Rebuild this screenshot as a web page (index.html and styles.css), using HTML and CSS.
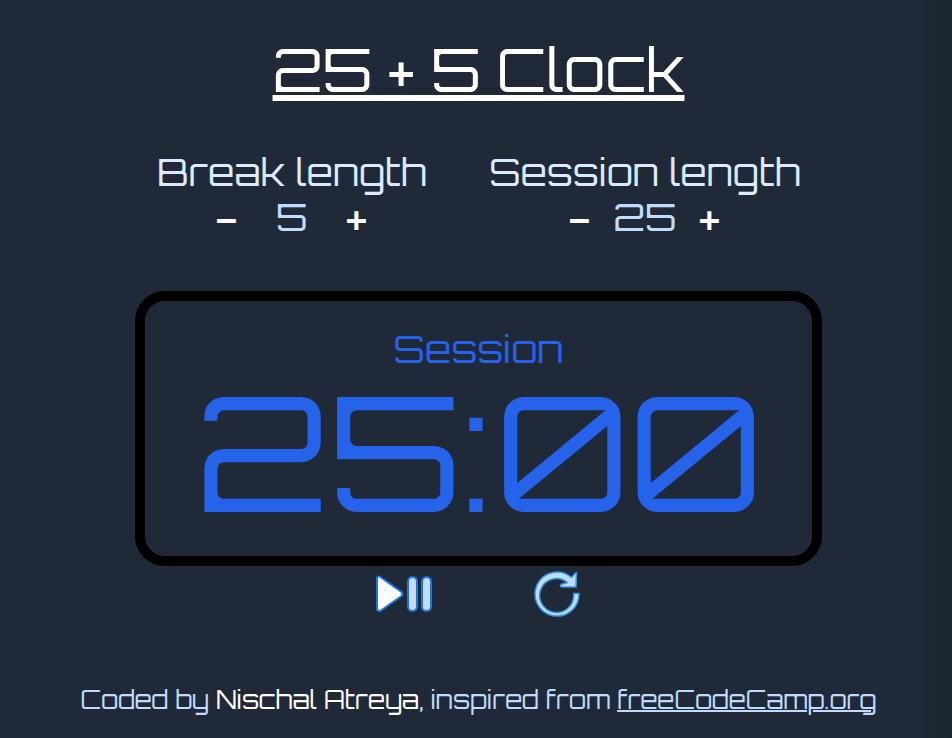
FILE: index.html
```
<!DOCTYPE html>
<html lang="en">
<head>
  <meta charset="utf-8">
  <meta name="viewport" content="width=device-width, initial-scale=1">
  <title>25 + 5 Clock</title>
  <link rel="stylesheet" href="styles.css">
</head>
<body>
  <main class="app">
    <h1 class="title">25 + 5 Clock</h1>

    <div class="lengths">
      <section class="length">
        <h2 class="length-label">Break length</h2>
        <div class="stepper">
          <button class="step" type="button" aria-label="Decrease break">-</button>
          <span class="length-value">5</span>
          <button class="step" type="button" aria-label="Increase break">+</button>
        </div>
      </section>
      <section class="length">
        <h2 class="length-label">Session length</h2>
        <div class="stepper">
          <button class="step" type="button" aria-label="Decrease session">-</button>
          <span class="length-value">25</span>
          <button class="step" type="button" aria-label="Increase session">+</button>
        </div>
      </section>
    </div>

    <section class="timer">
      <h2 class="timer-label">Session</h2>
      <div class="time">25:00</div>
    </section>

    <div class="controls">
      <button class="control" type="button" aria-label="Start or pause">
        <svg width="58" height="48" viewBox="1 0 58 48" stroke="#1676ee" stroke-width="2" stroke-linejoin="round">
          <path d="M2 8.500Q2 6 4.500 6.500L6 7.500L26.500 22Q28.500 24 26.500 26L6 40.500Q2 42 2 39Z" fill="#fff"/>
          <rect x="33" y="7" width="9" height="34" rx="4.500" fill="#c5dcfa"/>
          <rect x="47" y="7" width="9" height="34" rx="4.500" fill="#c5dcfa"/>
        </svg>
      </button>
      <button class="control" type="button" aria-label="Reset">
        <svg width="48" height="48" viewBox="1 0 48 48" fill="#bfdbfe" stroke="#3596e2" stroke-width="1.500" stroke-linejoin="round">
          <path d="M46 23.500A22 22 0 1 1 38.500 7.500L42.500 3L43.500 2.500L43 17H28.500Q26.500 15.500 28 14.500L34.500 12.500A17 17 0 1 0 40.500 23.500Z"/>
        </svg>
      </button>
    </div>

    <footer class="credit">Coded by <a class="author" href="#">Nischal Atreya</a>, inspired from <a class="source" href="#">freeCodeCamp.org</a></footer>
  </main>
</body>
</html>
```
FILE: styles.css
```
* {
  box-sizing: border-box;
}

body {
  margin: 0;
  min-height: 100vh;
  background: linear-gradient(to left, #1c262f, #1f2937 32px);
  color: #bfdbfe;
  font-family: Orbitron, "DejaVu Sans", sans-serif;
}

h1,
h2 {
  margin: 0;
  font-weight: 400;
}

button {
  padding: 0;
  border: 0;
  background: none;
  color: inherit;
  font: inherit;
  cursor: pointer;
}

.app {
  display: flex;
  flex-direction: column;
  align-items: center;
  padding: 39px 0 20px 5px;
}

.title {
  color: #fff;
  font-size: 60px;
  line-height: 60px;
  text-decoration: underline;
  text-decoration-thickness: 6px;
  text-underline-offset: 3px;
  text-decoration-skip-ink: none;
}

.lengths {
  display: flex;
  gap: 63px;
  margin-top: 50px;
}

.length {
  display: flex;
  flex-direction: column;
  align-items: center;
  font-size: 38px;
  line-height: 45px;
}

.length-label,
.timer-label {
  font-size: 38px;
}

.length-label {
  color: #dbeafe;
}

.stepper {
  display: flex;
}

.length-value {
  width: 96px;
  text-align: center;
}

.step {
  width: 34px;
  height: 45px;
  color: #fff;
  font-size: 48px;
}

.timer {
  display: flex;
  flex-direction: column;
  align-items: center;
  margin-top: 52px;
  padding: 25px 50px;
  border: 10px solid #000;
  border-radius: 30px;
  color: #2563eb;
}

.timer-label {
  line-height: 45px;
}

.time {
  font-size: 160px;
  line-height: 160px;
}

.controls {
  display: flex;
  gap: 100px;
  margin-top: 4px;
}

.control {
  display: flex;
}

.credit {
  margin-top: 64px;
  font-size: 25px;
  line-height: 36px;
}

.author {
  color: #fff;
  text-decoration: none;
}

.source {
  color: inherit;
  text-decoration-thickness: 2px;
}
```
